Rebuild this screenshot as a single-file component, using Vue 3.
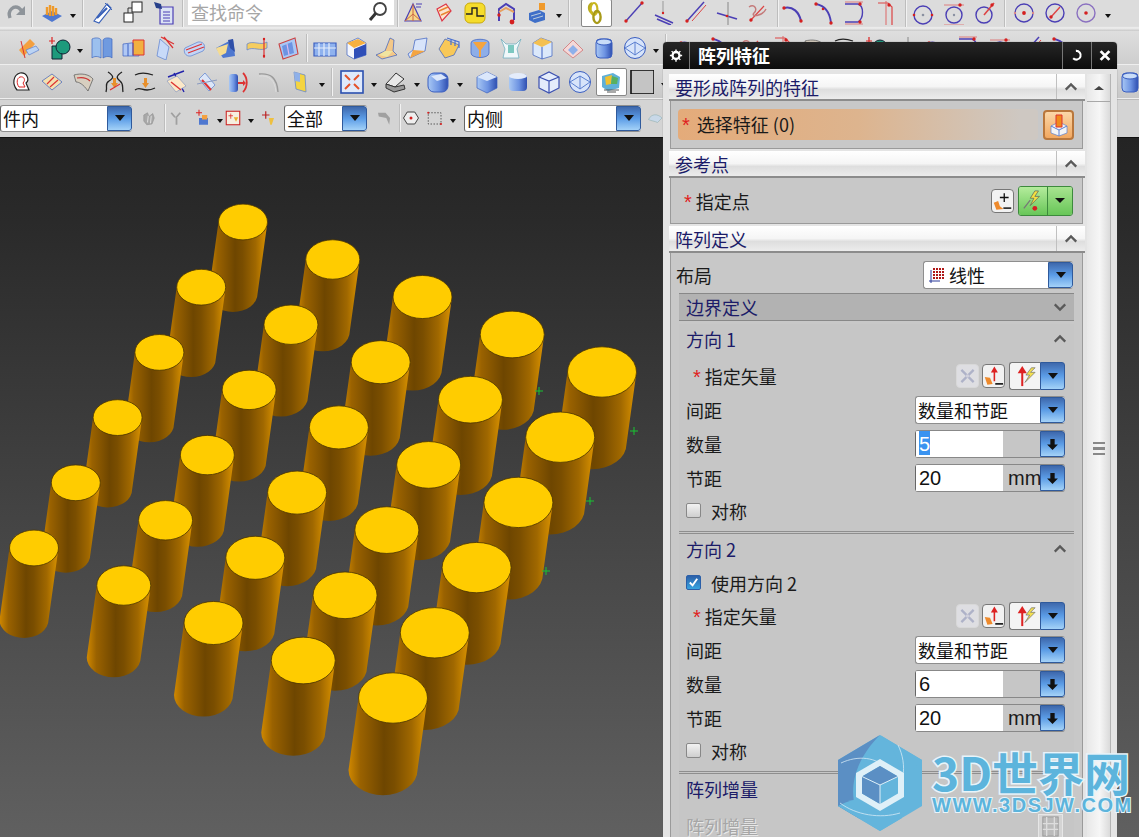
<template>
  <div class="page">
    <!-- 工具栏 -->
    <div class="toolbars">
      <div v-for="(row, r) in toolRows" :key="r" class="tool-row" :class="'row-' + r">
        <template v-for="(item, k) in row" :key="k">
          <i v-if="typeof item === 'number'" class="nudge" :style="{ marginLeft: item + 'px' }"></i>
          <i v-else-if="item === '|'" class="sep"></i>
          <i v-else-if="item === 'v'" class="caret"></i>
          <div v-else-if="item.findText" class="search">
            <span>{{ item.findText }}</span>
            <svg class="ico" viewBox="0 0 24 24" v-html="icons.loupe"></svg>
          </div>
          <div v-else-if="item.combo" class="combo tool-combo" :style="{ width: item.w + 'px' }">
            <span class="combo-text">{{ item.combo }}</span>
            <span class="drop"><b></b></span>
          </div>
          <div v-else class="cell" :class="{ pressed: item.startsWith('*') }">
            <svg class="ico" viewBox="0 0 24 24" v-html="icons[item.replace('*', '')]"></svg>
          </div>
        </template>
      </div>
    </div>

    <!-- 图形窗口 -->
    <div class="viewport">
      <svg class="scene" viewBox="0 138 1139 699">
        <defs>
          <linearGradient id="side" x1="0" x2="1" y1="0" y2="0">
            <stop offset="0" stop-color="#d08800" />
            <stop offset=".15" stop-color="#9a6200" />
            <stop offset=".45" stop-color="#6e4600" />
            <stop offset=".58" stop-color="#7a4e00" />
            <stop offset=".8" stop-color="#a06800" />
            <stop offset="1" stop-color="#dc9400" />
          </linearGradient>
          <linearGradient id="gB" x1="0" x2="1" y1="0" y2="0">
            <stop offset="0" stop-color="#a9c8f4" />
            <stop offset=".55" stop-color="#6d93e2" />
            <stop offset="1" stop-color="#2f4fb0" />
          </linearGradient>
        </defs>
        <g v-for="c in cylinders" :key="c.id">
          <path :d="c.side" fill="url(#side)" />
          <ellipse :cx="c.x" :cy="c.y" :rx="c.rx" :ry="c.ry" fill="#ffcc00" stroke="#4a3300" stroke-width=".8" />
        </g>
        <path v-for="m in marks" :key="m.x" :d="`M${m.x - 4} ${m.y}h8M${m.x} ${m.y - 4}v8`" stroke="#19c432" stroke-width="1" />
      </svg>
    </div>

    <!-- 阵列特征 对话框 -->
    <div class="dialog">
      <div class="title-bar">
        <svg class="gear" viewBox="0 0 16 16">
          <circle cx="8" cy="8" r="4" fill="none" stroke="#fff" stroke-width="2.6" />
          <path d="M8 1v3M8 12v3M1 8h3M12 8h3M3 3l2 2M11 11l2 2M13 3l-2 2M5 11l-2 2" stroke="#fff" stroke-width="1.6" />
        </svg>
        <span class="title-text">阵列特征</span>
        <svg class="title-btn" viewBox="0 0 16 16">
          <path d="M5 3.5A5 5 0 1 1 5 12.5" transform="rotate(20 8 8)" fill="none" stroke="#fff" stroke-width="2.4" />
        </svg>
        <svg class="title-btn close" viewBox="0 0 16 16">
          <path d="M3 3 13 13M13 3 3 13" stroke="#fff" stroke-width="3.2" />
        </svg>
      </div>

      <div class="dialog-body">
        <div class="dialog-main">
          <div class="sec-head first">
            <span>要形成阵列的特征</span>
            <div class="chev-cell"><svg class="chev" viewBox="0 0 16 10"><path d="M2 8 8 2 14 8" /></svg></div>
          </div>
          <div class="sec-body feature-body">
            <div class="feature-pick"><em>*</em>选择特征 (0)</div>
            <div class="orange-btn">
              <svg class="ico" viewBox="0 0 24 24" v-html="icons.pick"></svg>
            </div>
          </div>

          <div class="sec-head">
            <span>参考点</span>
            <div class="chev-cell"><svg class="chev" viewBox="0 0 16 10"><path d="M2 8 8 2 14 8" /></svg></div>
          </div>
          <div class="sec-body point-body">
            <div class="label"><em>*</em>指定点</div>
            <div class="mini-btn"><svg viewBox="0 0 24 24" v-html="icons.pointAdd"></svg></div>
            <div class="green-split">
              <span class="green-main"><svg viewBox="0 0 24 24" v-html="icons.bolt"></svg></span>
              <span class="green-drop"><b></b></span>
            </div>
          </div>

          <div class="sec-head">
            <span>阵列定义</span>
            <div class="chev-cell"><svg class="chev" viewBox="0 0 16 10"><path d="M2 8 8 2 14 8" /></svg></div>
          </div>
          <div class="sec-body def-body">
            <div class="layout-row">
              <span class="plain">布局</span>
              <div class="combo layout-combo">
                <svg class="grid-ico" viewBox="0 0 16 16" v-html="icons.gridDots"></svg>
                <span class="combo-text">线性</span>
                <span class="drop"><b></b></span>
              </div>
            </div>
            <div class="bound-head">
              <span>边界定义</span>
              <svg class="chev" viewBox="0 0 16 10"><path d="M2 2 8 8 14 2" /></svg>
            </div>

            <div v-for="d in directions" :key="d.name" class="group">
              <div class="group-head">
                <span>{{ d.name }}</span>
                <svg class="chev" viewBox="0 0 16 10"><path d="M2 8 8 2 14 8" /></svg>
              </div>
              <div class="group-rows">
                <div v-if="d.useOption" class="check-row use-row">
                  <span class="check on">
                    <svg viewBox="0 0 14 14"><path d="M3 7 6 10 11 3" fill="none" stroke="#fff" stroke-width="2" /></svg>
                  </span>
                  使用方向 2
                </div>
                <div class="row">
                  <div class="label vec"><em>*</em>指定矢量</div>
                  <div class="mini-btn off"><svg viewBox="0 0 24 24" v-html="icons.vecOff"></svg></div>
                  <div class="mini-btn"><svg viewBox="0 0 24 24" v-html="icons.vecAdd"></svg></div>
                  <div class="vec-split">
                    <span class="vec-main"><svg viewBox="0 0 24 24" v-html="icons.vecBolt"></svg></span>
                    <span class="drop"><b></b></span>
                  </div>
                </div>
                <div class="row">
                  <span class="plain">间距</span>
                  <div class="combo field">
                    <span class="combo-text">数量和节距</span>
                    <span class="drop"><b></b></span>
                  </div>
                </div>
                <div class="row">
                  <span class="plain">数量</span>
                  <div class="spin field">
                    <span class="spin-val"><mark v-if="d.selected">{{ d.count }}</mark><template v-else>{{ d.count }}</template></span>
                    <span class="spin-unit"></span>
                    <span class="drop arrow"><svg viewBox="0 0 12 12"><path d="M4 1h4v5h3L6 11 1 6h3Z" /></svg></span>
                  </div>
                </div>
                <div class="row">
                  <span class="plain">节距</span>
                  <div class="spin field">
                    <span class="spin-val">20</span>
                    <span class="spin-unit">mm</span>
                    <span class="drop arrow"><svg viewBox="0 0 12 12"><path d="M4 1h4v5h3L6 11 1 6h3Z" /></svg></span>
                  </div>
                </div>
                <div class="check-row sym-row">
                  <span class="check"></span>
                  对称
                </div>
              </div>
            </div>

            <div class="group">
              <div class="group-head"><span>阵列增量</span></div>
              <div class="row inc-row">
                <span class="plain disabled">阵列增量</span>
                <div class="inc-btn"><svg viewBox="0 0 24 24" v-html="icons.incGrey"></svg></div>
              </div>
            </div>
          </div>
        </div>

        <div class="scrollbar">
          <div class="scroll-up"><svg viewBox="0 0 12 8"><path d="M1 6 6 2 11 6Z" /></svg></div>
          <div class="scroll-track"><i class="grip"></i></div>
        </div>
      </div>
    </div>

    <!-- 水印 -->
    <div class="watermark">
      <svg class="wm-logo" viewBox="0 0 84 96">
        <path d="M42 0 84 25V71L42 96 0 71V25Z" fill="#64b5dc" />
        <path d="M42 0 0 25V71L22 84C10 62 12 30 42 0Z" fill="#5b8fc4" />
        <path d="M0 71C24 58 50 62 64 83L42 96Z" fill="#64b5dc" />
        <path d="M42 0C58 14 66 34 60 52L84 25Z" fill="#64b5dc" />
        <path d="M3 28C20 20 38 22 50 34M60 10C70 30 66 54 52 68M2 68C18 80 42 84 62 78" fill="none" stroke="#d6eaf5" stroke-width=".8" />
        <path d="M42 24 66 38V62L42 76 18 62V38Z" fill="#dff0f8" />
        <path d="M42 31 60 41.5V58.5L42 69 24 58.5V41.5Z" fill="#64b5dc" />
        <path d="M42 50 24 41.5V58.5L42 69Z" fill="#5b8fc4" />
        <path d="M42 31 60 41.5 42 50 24 41.5Z" fill="#5b8fc4" />
        <path d="M24 41.5 42 50 60 41.5M42 50V69" fill="none" stroke="#dff0f8" stroke-width="1" />
      </svg>
      <div class="wm-text">
        <div class="wm-big">3D世界网</div>
        <div class="wm-url">WWW.3DSJW.COM</div>
      </div>
    </div>
  </div>
</template>

<script setup>
// 小工具：拼 svg 片段
const L = (d, c = '#4b3fb5', w = 1.4) => `<path d="${d}" fill="none" stroke="${c}" stroke-width="${w}"/>`
const F = (d, c, s = 'none', w = 0.7) => `<path d="${d}" fill="${c}" stroke="${s}" stroke-width="${w}"/>`
const D = (x, y, r = 1.7, c = '#d42020') => `<circle cx="${x}" cy="${y}" r="${r}" fill="${c}"/>`

const P = '#4b3fb5'
const icons = {
  loupe: `<circle cx="14" cy="9" r="6" fill="#fff" stroke="#444" stroke-width="1.8"/>` + L('M10 13 4 20', '#333', 3),
  undo: L('M6 17C3 9 10 4 15 7L19 11', '#8e949a', 3.4) + F('M21 5V14H12Z', '#8e949a'),
  spikes: F('M2 15 12 21 22 15 12 10Z', '#4f78d0') + L('M7 14V6M10 15V4M13 15V5M16 14V7', '#ee9a2c', 2.4),
  capsule: F('M4 20 17 3 21 7 9 22Z', '#fff', '#3860b8', 1.2) + L('M7 17 17 7', '#3860b8', 2.2) + L('M15 2 22 9', '#3860b8', 1),
  squares: `<rect x="11" y="1" width="10" height="10" fill="#fff" stroke="#222"/><rect x="3" y="12" width="9" height="9" fill="#fff" stroke="#222"/>` + L('M7 12V7H11', '#333', 1),
  doc: F('M8 6H21V23H8Z', '#dbe3f4', P, 1.2) + F('M2 1 9 3 10 8 4 7Z', '#27408a') + L('M11 11H18M11 14H18M11 17H18M11 20H18', P, 1),
  pyramid: F('M12 3 4 20H20Z', '#f6d88a', P, 1.2) + L('M12 3V20M4 20 12 13 20 20', '#c64', 1) + L('M15 3H21M15 6H20', P, 1),
  ribbon: F('M5 8 14 3 19 10 10 20Z', '#fbe4cf', '#d34', 1.2) + L('M7 10 16 6M9 14 18 10', '#e88530', 1.4),
  wave: `<rect x="2" y="2" width="20" height="20" rx="5" fill="#f5dc2c" stroke="#c8a90c"/>` + L('M3 13H9V7H14V15H21', '#222', 1.4),
  arch: L('M5 20V8L12 3 20 8V19', P, 2) + L('M5 11 12 7 20 11', '#e8a060', 2) + D(5, 14) + D(18, 21, 2.4),
  boxes: F('M4 12 14 9 20 12V19L10 22 4 19Z', '#3f6fc8') + L('M6 15 16 12M8 18 18 15', '#bcd', 1) + F('M14 2H20V9H14Z', '#f09a2c'),
  chain: L('M8 2C3 5 5 11 9 12', '#b8aa20', 2.4) + `<ellipse cx="10" cy="8" rx="3.4" ry="6" fill="none" stroke="#c8b620" stroke-width="2.2"/><ellipse cx="13" cy="16" rx="3.6" ry="6" fill="none" stroke="#a89a18" stroke-width="2.4"/>`,
  line1: L('M4 20 20 2') + D(4, 20) + D(20, 2),
  line2: L('M2 14 20 22M4 18 18 24', P, 1.6) + L('M10 0V12', '#999', 1) + D(10, 12, 1.2),
  line3: L('M3 20 20 1', P, 1.5) + L('M8 20 22 4', '#d44', 1) + D(3, 20),
  line4: L('M2 12 22 18', P, 1.6) + L('M13 1V24', '#888', 1) + D(12, 15, 1.3),
  line5: L('M4 20 18 5', '#d44', 1.2) + L('M3 6C8 2 12 8 8 12S16 16 20 8', '#c47a7a', 1.4) + D(5, 19),
  curve1: L('M3 7C12 5 18 11 20 20', P, 2) + D(3, 7) + D(20, 20),
  curve2: L('M4 3C14 5 18 12 19 22', P, 1.8) + D(4, 3) + D(11, 8, 1.3) + D(19, 22),
  curve3: L('M2 3H15C21 5 21 17 15 21H2', P, 1.4) + L('M2 1H20M2 23H20', '#d66', 0.8) + D(17, 3) + D(17, 21),
  curve4: L('M4 2H14L18 6V24', '#d44', 1.2) + L('M12 0V24', '#d66', 1) + D(15, 4),
  circ1: `<circle cx="12" cy="14" r="9" fill="none" stroke="${P}" stroke-width="1.4"/>` + D(12, 14, 1.3, '#8a90a0') + D(3, 14, 1.3) + D(21, 14, 1.3),
  circ2: `<circle cx="12" cy="14" r="8" fill="none" stroke="${P}" stroke-width="1.4"/>` + L('M2 4H22M2 24H22', '#d66', 0.8) + D(12, 14, 1.2, '#8a90a0') + D(18, 4),
  circ3: `<circle cx="11" cy="14" r="8" fill="none" stroke="${P}" stroke-width="1.4"/>` + L('M11 14 21 2', '#d44', 1.6) + D(19, 4),
  circ4: `<circle cx="12" cy="12" r="9" fill="none" stroke="${P}" stroke-width="1.4"/>` + D(12, 12, 1.9) + D(3, 12, 1.2, '#d98a8a') + D(21, 12, 1.2, '#d98a8a'),
  circ5: `<circle cx="12" cy="12" r="9" fill="none" stroke="${P}" stroke-width="1.4"/>` + L('M8 16 17 6', '#d44', 1.4) + D(8, 16),
  circ6: `<circle cx="12" cy="12" r="9" fill="none" stroke="#8a70c0" stroke-width="1.4"/>` + D(12, 12, 1.8),
  bars: F('M0 8H6V12H0ZM0 15H6V19H0Z', '#ee9420'),
  offset: F('M3 14 14 3 19 8 8 20Z', '#f4a040') + F('M10 14 20 10 23 14 13 19Z', '#bcd4f4', '#5a7fd0') + L('M5 5 9 22', '#d33', 1),
  teal: F('M5 10H15V23H5Z', '#1d9a7c', '#123', 1) + `<circle cx="16" cy="11" r="7" fill="#1d9a7c" stroke="#123"/>` + L('M5 1V8M2 5H8', '#d22', 1.2),
  book: F('M2 3C6 1 10 2 11 4V22C8 20 4 20 2 22Z', '#9cc0ee', '#3c66c0') + F('M22 3C18 1 14 2 13 4V22C16 20 20 20 22 22Z', '#6f9ae0', '#3c66c0'),
  slotted: F('M2 8 18 6V20H2Z', '#b0c8f4', '#3a5ec0') + F('M12 4H23V19H12Z', '#f2b040', '#d33', 1) + L('M7 8V20M12 7V20', '#3a5ec0', 1),
  fold: F('M8 3 17 11 14 24 5 20Z', '#c8daf8', '#5a7fd0') + L('M9 1 22 8M12 1 21 12', '#d33', 1.2),
  pill: F('M2 12 15 6C22 5 23 12 20 15L8 20C2 21 0 15 2 12Z', '#c4d6f6', '#5a7fd0') + L('M3 14 19 8M5 17 21 11', '#d33', 1.2),
  block: F('M2 12 19 3 21 20 9 22Z', '#4f78d0') + F('M2 12 14 8 12 17 6 20Z', '#f6dc90') + F('M14 4 19 3 21 16 16 12Z', '#2f4fa8'),
  twist: F('M2 8C8 4 16 10 22 6V12C16 16 8 10 2 14Z', '#f5cd60', '#5a7fd0') + L('M19 2V22', '#d33', 1.2) + D(19, 3, 1.2) + D(19, 20, 1.2),
  prism: F('M3 8 19 2 22 18 7 23Z', '#a9c8f4', '#c44', 1.1) + F('M6 10 16 6 18 17 8 20Z', '#6d93e2') + L('M11 8 13 19', '#dbe', 1.2),
  tile: F('M1 7H23V20H1Z', '#8fb2ee', '#3a5ec0', 1.2) + L('M6 7V20M11 7V20M16 7V20', '#e6eefb', 1.2) + L('M1 12H23', '#e6eefb', 1),
  boxO: F('M3 7 14 2 22 7V19L10 23 3 19Z', '#f4f6fc', '#3a5ec0') + F('M3 7 14 3 22 7 10 12Z', '#f6b040') + F('M10 13 22 8V19L10 23Z', '#2f4fb8'),
  web1: F('M15 2 19 4 18 15 22 19 7 23 1 19 10 15Z', '#f4c888', '#3a5ec0') + F('M4 19 10 15 18 15 12 21Z', '#f0e4a0'),
  web2: F('M9 4 21 2 19 15 4 22 2 18 7 14Z', '#d8e4fa', '#3a5ec0') + F('M7 14 19 15 4 22Z', '#f4a440'),
  web3: F('M2 13 8 3 22 9 17 19 8 22Z', '#f8c858', '#3a5ec0') + L('M10 2 22 6V12M14 3V9M18 4V10', '#4a70d0', 1.2),
  funnel: F('M3 7C3 2 21 2 21 7V17C21 23 3 23 3 17Z', '#8eaee8', '#3a5ec0') + F('M5 6H19L13 14V21H11V14Z', '#f4a440'),
  cup: F('M2 3 7 8H17L22 3 18 13 20 22H4L6 13Z', '#f0f8fa', '#6ab') + F('M9 9H15V17H9Z', '#7cc8c0'),
  crate: F('M3 7 11 2 22 6V20L12 23 3 19Z', '#dbe8fa', '#3a5ec0') + F('M3 7 11 2 22 6 12 11Z', '#f4c050') + L('M12 11V23', '#3a5ec0', 1),
  diamond: F('M2 14 12 4 22 14 12 22Z', '#f4d8d8', '#c66') + F('M7 14 12 9 17 14 12 19Z', '#8eb0ea'),
  cyl: `<rect x="4" y="3" width="16" height="19" rx="4" fill="url(#gB)" stroke="#3a5ec0"/>` + `<ellipse cx="12" cy="6" rx="7.5" ry="3" fill="#c8dcf8" stroke="#3a5ec0"/>`,
  sphere: `<circle cx="12" cy="12" r="10.5" fill="#d7e4fa" stroke="#3a5ec0"/>` + L('M2 12 12 6 22 12 12 19ZM12 6V19', '#5a7fd0', 1),
  outline: F('M11 3C18 2 21 10 17 13L20 20 H8C3 14 4 5 11 3Z', '#fff', '#222', 1.2) + F('M11 7C15 6 17 10 14 13L16 17H10C7 13 8 8 11 7Z', '#fff', '#d22', 1),
  sheetLink: F('M2 11 12 4 22 12 12 20Z', '#f4e0b0', '#3a5ec0') + L('M7 14 14 7M10 17 18 10', '#d33', 1.2),
  wedge: F('M3 5C10 3 18 4 22 9L17 21C12 14 8 12 5 12Z', '#d8cfc0', '#555') + L('M6 8C11 7 16 8 19 11', '#c33', 1.2),
  bridge: L('M6 2C12 6 12 8 7 11S6 16 4 22M20 2C14 6 14 8 18 11S20 17 21 22', '#222', 1.3) + F('M11 8H14V13H16L12.5 18 9 13H11Z', '#e8902c') + L('M8 20 18 14', '#d33', 1.2),
  bridge2: L('M2 5C8 2 14 3 20 5M2 20C8 15 10 24 22 18', '#222', 1.3) + F('M11 8H14V13H16L12.5 18 9 13H11Z', '#e8902c'),
  offset2: L('M4 7 20 1M10 3 20 22', '#22a', 1.4) + F('M3 11 13 6 22 16 12 22Z', '#fbe8c8', '#8a9ac0') + L('M7 12 17 20', '#d33', 1.4),
  offset3: F('M4 9 10 3 20 15 14 21Z', '#dbe6f8', '#5a7fd0') + L('M7 10 16 20', '#d33', 2) + L('M2 14 22 10', '#8a9ac0', 1),
  thick: `<rect x="3" y="4" width="9" height="18" rx="3" fill="url(#gB)"/>` + L('M17 3C22 8 22 17 17 22', '#d33', 1.8) + F('M12 12H17V10L20 13 17 16V14H12Z', '#d33'),
  blendGrey: L('M2 4C14 3 20 8 21 22', '#9a9a9a', 1.4) + L('M2 6C12 5 18 10 19 22', '#ddd', 1),
  note: F('M6 2 17 5 18 22 8 19Z', '#f4d440', '#5a7fd0') + F('M6 2 12 3.5 12 12 7 11Z', '#8eb0ea'),
  fit: `<rect x="1" y="1" width="22" height="22" fill="#dfe9fb" stroke="#2a4fb0" stroke-width="1.6"/>` + L('M5 5 10 10M19 5 14 10M5 19 10 14M19 19 14 14', '#e4522a', 2),
  render: F('M3 14 13 3 21 9 12 17Z', '#e8e8e8', '#333', 1) + F('M3 14 12 17 21 15 22 19 11 22 3 18Z', '#999', '#333', 1),
  cubeRound: `<rect x="2" y="3" width="20" height="19" rx="6" fill="url(#gB)" stroke="#3a5ec0"/>` + F('M5 6 15 4 21 8 11 11Z', '#dbe7fb'),
  cubeSolid: F('M2 7 12 2 22 7V18L12 23 2 18Z', 'url(#gB)', '#3a5ec0') + F('M2 7 12 2 22 7 12 11Z', '#dbe7fb'),
  cylSoft: `<rect x="3" y="4" width="18" height="17" rx="4" fill="url(#gB)"/>` + `<ellipse cx="12" cy="6" rx="9" ry="3" fill="#e4ecfb"/>`,
  cubeWire: F('M2 7 12 2 22 7V18L12 23 2 18Z', '#e4ecfb', '#3a4fb0', 1.2) + L('M2 7 12 11 22 7M12 11V23', '#3a4fb0', 1.2),
  layers: F('M3 6 14 3 21 7 20 18 9 21 3 17Z', '#5fb0d8') + F('M6 7 13 5 12 14 7 15Z', '#f0c030') + F('M13 6 19 8 18 14 12 14Z', '#58b060') + L('M5 20H20M8 22H17', '#555', 1),
  black: `<rect x="1" y="0" width="23" height="24" fill="#c4c4c4" stroke="#111" stroke-width="1.6"/>`,
  greyHand: F('M5 8 10 5 12 10 17 6 19 12 16 20 9 21 5 16Z', '#a8a8a8', '#8a8a8a') + L('M11 9 10 18M15 9 14 19', '#ddd', 1.4),
  greyPin: L('M3 5 8 11M15 5 9 12M10 12V21', '#a0a0a0', 2.4),
  snap: F('M8 12H20V21H8Z', '#4f78d0') + F('M12 8H19V14H12Z', '#f4a040') + L('M8 1V9M4 5H12', '#d22', 1.4),
  redBox: `<rect x="3" y="3" width="18" height="18" fill="#f6eee0" stroke="#c22" stroke-width="1.4"/>` + L('M9 6V13M6 9H12', '#d22', 1) + F('M13 11H19L16 17Z', '#e8b030'),
  pin: L('M9 3V13M4 8H14', '#b22', 1.6) + F('M13 12H20L17 21H15Z', '#eec040'),
  greyTrim: F('M4 5H14L20 12 19 21 15 12 5 10Z', '#a0a0a0'),
  hexDot: F('M7 4H17L22 12 17 20H7L2 12Z', '#eee', '#333', 1.2) + D(12, 12, 2),
  dashRect: `<rect x="3" y="5" width="17" height="15" fill="none" stroke="#333" stroke-dasharray="2 2"/>` + D(3, 5, 1.4) + D(20, 20, 1.4),
  greyLens: F('M2 14C6 6 14 6 20 12L14 18C10 16 6 16 2 14Z', '#c8d8e8', '#8aa'),
  pick: F('M4 13 12 9 20 13V20L12 23 4 20Z', '#f4f4f4', '#5a7fd0') + F('M9 2H15V14H9Z', '#f08a1c', '#d33', 1) + L('M4 13 12 17 20 13M12 17V23', '#5a7fd0', 1),
  pointAdd: L('M14 3V13M9 8H19', '#111', 1.5) + F('M2 14 7 12 9 18 13 21 5 22Z', '#ee8a2c') + L('M13 20H22', '#333', 2),
  bolt: F('M14 1 9 9H13L9 17 19 7H14L18 1Z', '#f4e040', '#555') + L('M2 20 9 11', '#777', 1.4) + D(14, 20, 2.6),
  vecOff: L('M5 5 19 19M19 5 5 19', '#aeb2c8', 2.6) + `<circle cx="12" cy="12" r="2" fill="#d0d0dc"/>`,
  vecAdd: L('M13 6V18', '#d22', 1.8) + F('M13 1 17 8H9Z', '#d22') + F('M2 13 8 14 11 21 5 22Z', '#ee8a2c') + L('M14 21H23', '#222', 2),
  vecBolt: L('M9 7V23', '#d22', 2.2) + F('M9 1 14 9H4Z', '#d22') + F('M19 3 13 11H17L12 19 23 8H18L23 3Z', '#f4e050', '#666'),
  gridDots: L('M1 14H12M3 3V16', '#2a3a9a', 1) + [5, 8, 11, 14].map(x => [1, 4, 7, 10].map(y => `<rect x="${x}" y="${y}" width="2" height="2" fill="#b01818"/>`).join('')).join(''),
  incGrey: `<rect x="4" y="2" width="16" height="20" fill="#bbb" stroke="#999"/>` + L('M8 2V22M16 2V22M4 9H20M4 15H20', '#ddd', 1.4),
}

const row0 = [
  'undo', -3, '|', 'spikes', 'v', '|', -1, 'capsule', 'squares', 'doc', '|', 1, { findText: '查找命令' }, '|', -4.5,
  'pyramid', 'ribbon', 'wave', 'arch', 'boxes', 'v', '|', 8, '*chain', 7,
  'line1', 'line2', 'line3', 'line4', 'line5', '|', -4,
  'curve1', 'curve2', 'curve3', 'curve4', '|', -2,
  'circ1', 'circ2', 'circ3', '|',
  'circ4', 'circ5', 'circ6', 'v',
]
const row1 = [
  -12, 'bars', -7, 'offset', 'teal', 'v', 'book', 'slotted', 'fold', 'pill', 'block', 'twist', 'prism', '|', -2,
  'tile', 'boxO', 'web1', 'web2', 'web3', 'funnel', 'cup', 'crate', 'diamond', 'cyl', 'sphere', 'v', '|',
  4, 'curve1', 'curve2', 'line5', 'curve4', 'wedge', 'bridge2', 'teal', 'line4', 'curve1', 'curve3', 'circ2', 'line3', 'curve2',
]
const row2 = [
  5.5, 'outline', 'sheetLink', 'wedge', 'bridge', 'bridge2', 'offset2', 'offset3', 'thick', 'blendGrey', 'note', 'v', '|', 1,
  'fit', 'v', 'render', 'v', 'cubeRound', 'v', 6, 'cubeSolid', 'cylSoft', 'cubeWire', 'sphere', '*layers', 'black', 'v',
  445, 'cyl', 'boxO',
]
const row3 = [
  { combo: '件内', w: 132 }, 5, 'greyHand', '|', -3, 'greyPin', 'snap', 'v', -5, 'redBox', 'v', -1, 'pin', 4,
  { combo: '全部', w: 83 }, 5, 'greyTrim', '|', -5, 'hexDot', 'dashRect', 'v', 5, { combo: '内侧', w: 177 }, 3, 'greyLens',
]
const toolRows = [row0, row1, row2, row3]

// 6 x 5 圆柱阵列
const cylinders = []
for (let r = 0; r < 6; r++) {
  for (let i = 0; i < 5; i++) {
    const x = 243 + 89.75 * i - 41.8 * r
    const y = 222 + 37.5 * i + 65.2 * r
    const rx = 24.5 + 2.5 * i
    const ry = rx * 0.73
    const side = `M${x - rx} ${y}L${x - rx - 10} ${y + 72}A${rx} ${ry} 0 0 0 ${x + rx - 10} ${y + 72}L${x + rx} ${y}Z`
    cylinders.push({ id: `${r}-${i}`, x, y, rx, ry, side })
  }
}

const marks = [
  { x: 539, y: 391 },
  { x: 634, y: 431 },
  { x: 590, y: 501 },
  { x: 546, y: 571 },
]

const directions = [
  { name: '方向 1', count: '5', selected: true, useOption: false },
  { name: '方向 2', count: '6', selected: false, useOption: true },
]
</script>

<style>
html, body {
  margin: 0;
  overflow: hidden;
}
</style>

<style scoped>
.page {
  position: relative;
  width: 1139px;
  height: 837px;
  overflow: hidden;
  display: flex;
  flex-direction: column;
  font-family: "Noto Sans CJK SC", "Liberation Sans", sans-serif;
  font-size: 18px;
  color: #1a1a1a;
}

/* toolbars */
.toolbars {
  flex: none;
  height: 138px;
  background: #d8d8d8;
  border-bottom: 1px solid #111;
  box-sizing: border-box;
}
.tool-row {
  display: flex;
  align-items: center;
  white-space: nowrap;
}
.row-0 {
  height: 31px;
  padding-bottom: 6px;
  box-sizing: border-box;
  background: linear-gradient(#dcdcdc 85%, #f0f0f0 90%, #c8c8c8);
}
.row-1 {
  height: 33px;
  background: linear-gradient(#dedede, #cecece);
  border-bottom: 1px solid #eee;
}
.row-2 {
  height: 33px;
  background: linear-gradient(#d8d8d8, #c8c8c8);
  border-bottom: 1px solid #eee;
}
.row-3 {
  height: 38px;
  background: #d4d4d4;
  border-top: 1px solid #bbb;
  padding-bottom: 1px;
  box-sizing: border-box;
}
.nudge {
  display: block;
  flex: none;
}
.cell {
  flex: none;
  width: 31px;
  height: 26px;
  display: flex;
  align-items: center;
  justify-content: center;
}
.row-3 .cell {
  width: 24px;
}
.row-3 .ico {
  width: 18px;
  height: 18px;
}
.ico {
  width: 24px;
  height: 24px;
  display: block;
}
.pressed {
  background: #fff;
  border: 1px solid #888;
  border-radius: 2px;
  box-sizing: border-box;
  height: 28px;
}
.sep {
  flex: none;
  display: block;
  width: 2px;
  height: 28px;
  margin: 0 3px;
  background: #bdbdbd;
  border-right: 1px solid #f2f2f2;
  box-sizing: border-box;
}
.caret {
  flex: none;
  display: block;
  width: 12px;
  height: 8px;
  position: relative;
  top: 3px;
}
.caret::after {
  content: "";
  position: absolute;
  left: 3px;
  top: 2px;
  border: 3px solid transparent;
  border-top: 4px solid #111;
}
.search {
  flex: none;
  width: 206px;
  height: 26px;
  margin-top: -1px;
  background: #fff;
  box-sizing: border-box;
  padding: 0 4px 0 3px;
  display: flex;
  align-items: center;
  justify-content: space-between;
  color: #a6a6a6;
  line-height: 24px;
}

/* combo */
.combo {
  display: flex;
  align-items: center;
  background: #fff;
  box-sizing: border-box;
  border: 1px solid #8e8e8e;
  border-right: none;
  border-radius: 3px;
  overflow: hidden;
}
.tool-combo {
  flex: none;
  height: 27px;
  border-left: 1px solid #666;
}
.combo-text {
  flex: 1;
  padding-left: 2px;
  line-height: 26px;
  color: #111;
}
.drop {
  flex: none;
  width: 25px;
  height: 100%;
  align-self: stretch;
  display: flex;
  align-items: center;
  justify-content: center;
  background: linear-gradient(#3e68ac, #5b9ce6 50%, #a4d2f8);
  border: 1px solid #2f5a9c;
  box-sizing: border-box;
  border-radius: 0 3px 3px 0;
}
.drop b {
  display: block;
  border: 5px solid transparent;
  border-top: 6px solid #111;
  border-bottom: none;
}

/* viewport */
.viewport {
  flex: 1;
  background: linear-gradient(#242424, #2a2a2a 12%, #606060);
}
.scene {
  display: block;
  width: 100%;
  height: 100%;
}

/* dialog */
.dialog {
  position: absolute;
  left: 663px;
  top: 42px;
  width: 454px;
  height: 795px;
  background: #e4e4e4;
  box-shadow: 0 0 1px #555;
  border-radius: 4px 4px 0 0;
  overflow: hidden;
}
.title-bar {
  height: 27px;
  background: linear-gradient(#262626, #0c0c0c);
  display: flex;
  align-items: center;
  color: #fff;
}
.gear {
  width: 14px;
  height: 27px;
  margin: 0 0 0 6px;
  padding-right: 6px;
  border-right: 1px solid #777;
}
.title-text {
  flex: 1;
  padding-left: 8px;
  font-weight: 700;
  line-height: 27px;
}
.title-btn {
  width: 14px;
  height: 27px;
  padding: 0 7px;
  border-left: 1px solid #777;
}
.close {
  padding: 0 5px 0 6px;
}

.dialog-body {
  display: flex;
  height: 768px;
  padding: 5px 0 0 6px;
  box-sizing: border-box;
}
.dialog-main {
  flex: none;
  width: 416px;
}
.sec-head {
  height: 27px;
  display: flex;
  align-items: center;
  box-sizing: border-box;
  padding-left: 6px;
  background: linear-gradient(#fff, #f5f5f5 50%, #dedede 62%, #ececec);
  border-bottom: 2px solid #8c8c8c;
  color: #1b1b68;
}
.sec-head > span {
  flex: 1;
  line-height: 26px;
}
.chev-cell {
  width: 28px;
  height: 25px;
  border-left: 1px solid #c0c0c0;
  display: flex;
  align-items: center;
  justify-content: center;
}
.chev {
  width: 14px;
  height: 10px;
  flex: none;
}
.chev path {
  fill: none;
  stroke: #5a5a5a;
  stroke-width: 2.6;
}
.sec-body {
  background: #c8c8c8;
  border: 1px solid #9a9a9a;
  border-top: none;
  box-sizing: border-box;
  margin: 0 2px 2px 1px;
}
.feature-body {
  height: 48px;
  display: flex;
  align-items: center;
  padding: 0 8px 0 7px;
  gap: 5px;
}
.feature-pick {
  flex: 1;
  height: 31px;
  line-height: 31px;
  border-radius: 4px;
  padding-left: 4px;
  background: linear-gradient(90deg, #e4ab7a, #ddb48e 50%, #cec8c2 95%);
}
.feature-pick em {
  margin-right: 7px;
}
em {
  font-style: normal;
  color: #e02020;
  margin-right: 4px;
  font-size: 20px;
  font-family: "Liberation Sans", sans-serif;
}
.orange-btn {
  width: 31px;
  height: 30px;
  background: linear-gradient(#fbd7a8, #f2a860);
  border: 2px solid #b9773c;
  border-radius: 4px;
  box-sizing: border-box;
  display: flex;
  align-items: center;
  justify-content: center;
}
.point-body {
  height: 46px;
  display: flex;
  align-items: center;
  padding: 0 9px 0 13px;
  gap: 4px;
}
.label {
  flex: 1;
  white-space: nowrap;
}
.mini-btn {
  width: 23px;
  height: 24px;
  box-sizing: border-box;
  background: #f2f2f2;
  border: 1px solid #777;
  border-radius: 4px;
  flex: none;
}
.mini-btn svg,
.green-main svg,
.vec-main svg,
.inc-btn svg {
  display: block;
  width: 100%;
  height: 100%;
}
.mini-btn.off {
  background: #dedee2;
  border-color: #d8d8d8;
}
.green-split {
  width: 55px;
  height: 30px;
  display: flex;
  border: 1px solid #3d8a3d;
  border-radius: 3px;
  box-sizing: border-box;
  overflow: hidden;
}
.green-main {
  flex: 1;
  padding: 1px 3px;
  background: linear-gradient(#b4ec9c, #68c658);
  border-right: 1px solid #3d8a3d;
}
.green-drop {
  width: 24px;
  background: linear-gradient(#a8e490, #68c658);
  display: flex;
  align-items: center;
  justify-content: center;
}
.green-drop b {
  border: 5px solid transparent;
  border-top: 5px solid #111;
  border-bottom: none;
}

.def-body {
  margin-bottom: 0;
  padding: 8px 8px 0 8px;
  border-bottom: none;
}
.layout-row {
  height: 28px;
  display: flex;
  align-items: center;
  justify-content: space-between;
  margin-right: 1px;
}
.plain {
  line-height: 28px;
}
.layout-row .plain {
  margin-left: -3px;
}
.layout-combo {
  width: 150px;
  height: 28px;
}
.layout-combo .combo-text {
  padding-left: 5px;
}
.grid-ico {
  width: 16px;
  height: 16px;
  margin-left: 4px;
}
.bound-head {
  height: 28px;
  margin-top: 4px;
  background: #b2b2b2;
  box-sizing: border-box;
  border-top: 1px solid #888;
  border-bottom: 1px solid #888;
  display: flex;
  align-items: center;
  justify-content: space-between;
  padding: 0 7px 0 7px;
  color: #1b1b68;
  line-height: 26px;
  margin-bottom: 3px;
}
.group {
  border-bottom: 3px double #8e8e8e;
  background: #c6c6c6;
}
.group-head {
  height: 30px;
  display: flex;
  align-items: center;
  justify-content: space-between;
  padding: 0 7px 0 7px;
  color: #1b1b68;
  line-height: 28px;
}
.group-rows {
  padding: 5px 9px 5px 7px;
}
.row {
  height: 34px;
  display: flex;
  align-items: center;
  justify-content: space-between;
  gap: 3px;
}
.label.vec {
  padding-left: 7px;
}
.field {
  flex: none;
  width: 150px;
  height: 28px;
}
.vec-split {
  flex: none;
  width: 56px;
  height: 28px;
  display: flex;
  margin-left: 1px;
}
.vec-main {
  flex: 1;
  background: #f4f4f4;
  border: 1px solid #777;
  border-right: none;
  border-radius: 3px 0 0 3px;
  padding: 1px 4px;
  box-sizing: border-box;
}
.spin {
  display: flex;
  background: #c6c6c6;
  border-radius: 3px;
  overflow: hidden;
  border-bottom: 1px solid #888;
  border-top: 1px solid #888;
  box-sizing: border-box;
  font-family: "Liberation Sans", sans-serif;
  font-size: 20px;
}
.spin-val {
  width: 88px;
  background: #fff;
  padding-left: 3px;
  box-sizing: border-box;
  line-height: 26px;
  color: #111;
  border-left: 1px solid #666;
}
.spin-val mark {
  background: #3a93f0;
  color: #fff;
  display: inline-block;
  height: 24px;
}
.spin-unit {
  flex: 1;
  overflow: hidden;
  padding-left: 5px;
  line-height: 26px;
  width: 37px;
  white-space: nowrap;
}
.drop.arrow svg {
  width: 13px;
  height: 13px;
  fill: #111;
}
.check-row {
  display: flex;
  align-items: center;
  gap: 10px;
  line-height: 32px;
}
.sym-row {
  height: 31px;
}
.use-row {
  height: 33px;
  margin-top: -3px;
}
.check {
  width: 15px;
  height: 15px;
  box-sizing: border-box;
  border: 1px solid #888;
  border-radius: 2px;
  background: linear-gradient(#f2f2f2, #cfcfcf);
  flex: none;
}
.check svg {
  display: block;
  width: 100%;
  height: 100%;
}
.check.on {
  background: linear-gradient(#2b5fa8, #38a4e0);
  border-color: #2b5fa8;
}
.inc-row {
  padding: 5px 11px 0 7px;
  height: 34px;
}
.disabled {
  color: #a6a6a6;
  text-shadow: 1px 1px 0 #e8e8e8;
}
.inc-btn {
  width: 25px;
  height: 25px;
  background: #d4d4d4;
  border: 1px solid #e6e6e6;
  box-sizing: border-box;
}

.scrollbar {
  flex: none;
  width: 23px;
  margin-left: 2px;
  display: flex;
  flex-direction: column;
  background: linear-gradient(90deg, #e8e8e8, #f6f6f6 55%, #dadada);
  border-right: 1px solid #b4b4b4;
}
.scroll-up {
  height: 27px;
  border-bottom: 1px solid #a8a8a8;
  display: flex;
  align-items: center;
  justify-content: center;
  flex: none;
}
.scroll-up svg {
  width: 12px;
  height: 8px;
  fill: #444;
}
.scroll-track {
  flex: 1;
  display: flex;
  align-items: center;
  justify-content: center;
  padding-bottom: 42px;
}
.grip {
  display: block;
  width: 12px;
  height: 9px;
  border-top: 2px solid #888;
  border-bottom: 2px solid #888;
  background: linear-gradient(transparent 35%, #888 35%, #888 65%, transparent 65%);
}

/* watermark */
.watermark {
  position: absolute;
  left: 838px;
  top: 735px;
  display: flex;
  gap: 10px;
}
.wm-logo {
  width: 84px;
  height: 96px;
  flex: none;
}
.wm-text {
  white-space: nowrap;
  padding-top: 12px;
  font-weight: 700;
  color: #5cb4dc;
}
.wm-big {
  font-size: 46px;
  line-height: 48px;
  height: 48px;
  -webkit-text-stroke: 3px #e8f4fa;
  paint-order: stroke fill;
}
.wm-url {
  font-family: "Liberation Sans", sans-serif;
  font-size: 20px;
  line-height: 20px;
  letter-spacing: 1.5px;
  -webkit-text-stroke: 2px #e8f4fa;
  paint-order: stroke fill;
}
</style>
